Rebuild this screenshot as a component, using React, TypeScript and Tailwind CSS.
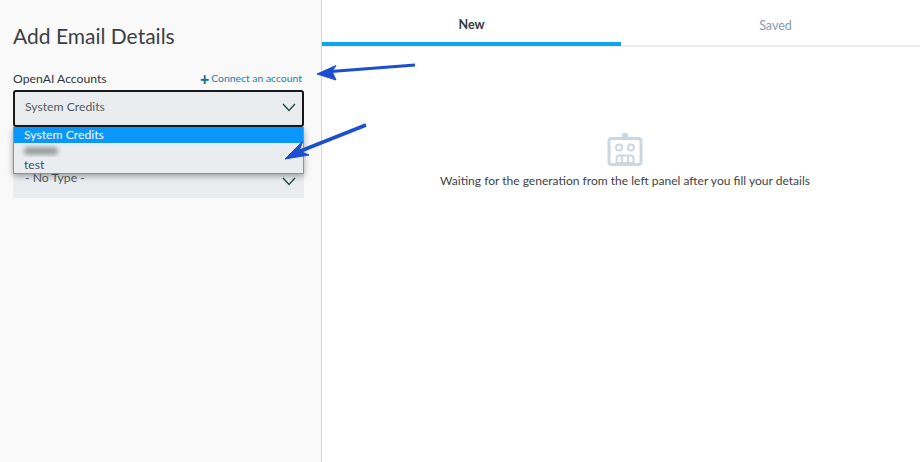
import React from 'react';

const font = "font-['Lato','Liberation_Sans',sans-serif]";

const Chevron: React.FC = () => (
  <svg width="14" height="9" viewBox="0 0 14 9" fill="none" className="shrink-0">
    <path d="M1 1 L7 7.5 L13 1" stroke="#1f4d45" strokeWidth="1.4" />
  </svg>
);

const RobotIcon: React.FC = () => (
  <svg width="36" height="34" viewBox="0 0 36 34" fill="none">
    <circle cx="18" cy="4" r="3.2" fill="#cdd7df" />
    <rect x="2" y="6.5" width="32" height="26" rx="2.5" stroke="#cdd7df" strokeWidth="3" />
    <circle cx="12" cy="15.5" r="3" stroke="#cdd7df" strokeWidth="2" />
    <circle cx="24" cy="15.5" r="3" stroke="#cdd7df" strokeWidth="2" />
    <path d="M9.5 31 V26.5 Q9.5 23.5 12.5 23.5 H23.5 Q26.5 23.5 26.5 26.5 V31 Z" stroke="#cdd7df" strokeWidth="2" />
    <path d="M15 24 V31 M21 24 V31" stroke="#cdd7df" strokeWidth="2" />
  </svg>
);

const Arrows: React.FC = () => (
  <svg width="920" height="462" viewBox="0 0 920 462" fill="none" className="absolute left-0 top-0 pointer-events-none">
    <path d="M415 65 L331 71.5" stroke="#1a4fd0" strokeWidth="3" />
    <path d="M317 74 L336 65.5 L332 71.5 L336 80 Z" fill="#1a4fd0" stroke="#1a4fd0" strokeWidth="1" />
    <path d="M366 125 L298 152" stroke="#1a4fd0" strokeWidth="3.5" />
    <path d="M285 159 L303 141 L299 151 L309 155 Z" fill="#1a4fd0" stroke="#1a4fd0" strokeWidth="1" />
  </svg>
);

export default function App() {
  return (
    <div className={`relative flex h-[462px] w-[920px] overflow-hidden bg-white ${font}`}>
      <div className="relative h-full w-[322px] shrink-0 border-r border-[#d5d5d5] bg-[#f9f9f9] px-[13px] pt-[23px]">
        <h1 className="text-[21px] leading-[26px] text-[#3b3f44]">Add Email Details</h1>

        <div className="mt-[18px] flex h-[24px] w-[291px] items-center justify-between">
          <span className="text-[12.2px] text-[#33383d]">OpenAI Accounts</span>
          <span className="mr-[2px] flex items-center gap-[2px] text-[10.4px] text-[#1f7ea8]">
            <span className="text-[16px] leading-none font-black text-[#12709c]">+</span>
            Connect an account
          </span>
        </div>

        <div className="-mt-[1px] flex h-[37px] w-[291px] items-center justify-between rounded-[3px] border-2 border-[#17191b] bg-[#e9edef] pb-[2px] pl-[10px] pr-[6px]">
          <span className="text-[12.2px] text-[#555b60]">System Credits</span>
          <Chevron />
        </div>

        <div className="mt-[16px] flex h-[55px] w-[291px] items-end justify-between bg-[#e9edef] pb-[12px] pl-[12px] pr-[8px]">
          <span className="relative -top-[0px] pb-[1px] text-[12.2px] leading-[15px] text-[#555b60]">- No Type -</span>
          <Chevron />
        </div>

        <div className="absolute left-[13px] top-[127px] h-[47px] w-[291px] border border-[#8f9295] border-t-0 bg-[#e9edef] shadow-[0_2px_6px_rgba(0,0,0,0.35)]">
          <div className="h-[16px] bg-[#0a96fb] pl-[10px] text-[12.2px] leading-[15px] text-white">System Credits</div>
          <div className="h-[14px] overflow-hidden pl-[10px] pt-[4px]">
            <div className="h-[8px] w-[34px] rounded-sm bg-[#9a9fa3] blur-[2px]" />
          </div>
          <div className="pl-[10px] text-[12.2px] leading-[15px] text-[#4a4f54]">test</div>
        </div>
      </div>

      <div className="flex h-full flex-1 flex-col">
        <div className="flex h-[47px] border-b-2 border-[#e8ecef]">
          <div className="flex h-[46px] w-[299px] items-center justify-center border-b-[4px] border-[#0aa5ee] pt-[9px] text-[12.5px] font-bold text-[#2f3a45]">
            New
          </div>
          <div className="flex flex-1 items-center justify-center pl-[10px] pt-[7px] text-[12.5px] text-[#8d9aa6]">Saved</div>
        </div>
        <div className="mt-[85px] flex flex-col items-center gap-[6px] pl-[8px]">
          <RobotIcon />
          <p className="text-[12.05px] leading-[18px] text-[#3e4347]">
            Waiting for the generation from the left panel after you fill your details
          </p>
        </div>
      </div>

      <Arrows />
    </div>
  );
}
